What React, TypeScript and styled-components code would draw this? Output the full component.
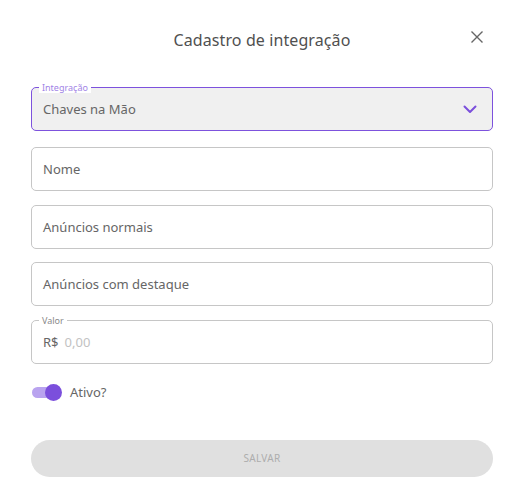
import React from "react";
import styled, { createGlobalStyle } from "styled-components";

const Global = createGlobalStyle`
  html, body { margin: 0; padding: 0; background: #fff; }
  body { font-family: "Noto Sans", "Liberation Sans", sans-serif; }
  * { box-sizing: border-box; }
`;

const Dialog = styled.div`
  width: 531px;
  height: 503px;
  background: #fff;
  padding: 0 38px 0 31px;
  display: flex;
  flex-direction: column;
`;

const Header = styled.div`
  position: relative;
  height: 80px;
  display: flex;
  align-items: center;
  justify-content: center;
`;

const Title = styled.h2`
  margin: 0;
  font-size: 16px;
  font-weight: 400;
  color: #505050;
  letter-spacing: 0.1px;
`;

const Close = styled.button`
  position: absolute;
  right: 6px;
  top: 27px;
  width: 20px;
  height: 20px;
  border: 0;
  background: none;
  padding: 0;
  display: flex;
  align-items: center;
  justify-content: center;
  cursor: pointer;
`;

const Form = styled.div`
  display: flex;
  flex-direction: column;
  padding-top: 7px;
`;

const Field = styled.div<{ $mt?: number; $select?: boolean }>`
  position: relative;
  height: 44px;
  margin-top: ${(p) => p.$mt ?? 0}px;
  border: 1px solid ${(p) => (p.$select ? "#7d52dd" : "#c6c6c6")};
  border-radius: 5px;
  background: ${(p) => (p.$select ? "#f0f0f0" : "#fff")};
  display: flex;
  align-items: center;
  padding: 0 11px;
  font-size: 13px;
  color: #666;
`;

const Legend = styled.span<{ $purple?: boolean }>`
  position: absolute;
  top: -6px;
  left: 7px;
  padding: 0 3px;
  background: #fff;
  font-size: 9px;
  line-height: 11px;
  color: ${(p) => (p.$purple ? "#a184e6" : "#8a8a8a")};
`;

const Value = styled.span`
  flex: 1;
`;

const Currency = styled.span`
  color: #666;
  margin-right: 6px;
`;

const Placeholder = styled.span`
  color: #c2c2c2;
`;

const ToggleRow = styled.div`
  display: flex;
  align-items: center;
  margin-top: 19px;
  height: 18px;
  font-size: 13px;
  color: #666;
`;

const Track = styled.div`
  position: relative;
  width: 26px;
  height: 11px;
  border-radius: 6px;
  background: #b9a3ef;
  margin-left: 1px;
  margin-right: 12px;
`;

const Thumb = styled.div`
  position: absolute;
  right: -4px;
  top: -3px;
  width: 17px;
  height: 17px;
  border-radius: 50%;
  background: #7b4fdc;
`;

const SaveButton = styled.button`
  margin-top: 39px;
  height: 37px;
  width: 100%;
  border: 0;
  border-radius: 19px;
  background: #e0e0e0;
  color: #adadad;
  font-family: inherit;
  font-size: 10px;
  line-height: 12px;
  padding: 0 0 2px;
  letter-spacing: 0.3px;
`;

export default function App() {
  return (
    <>
      <Global />
      <Dialog>
        <Header>
          <Title>Cadastro de integração</Title>
          <Close aria-label="Fechar">
            <svg width="14" height="14" viewBox="0 0 14 14">
              <path d="M1.5 1.5 L12.5 12.5 M12.5 1.5 L1.5 12.5" stroke="#666" strokeWidth="1.4" fill="none" />
            </svg>
          </Close>
        </Header>
        <Form>
          <Field $select>
            <Legend $purple>Integração</Legend>
            <Value>Chaves na Mão</Value>
            <svg width="14" height="9" viewBox="0 0 14 9" style={{ marginRight: 4 }}>
              <path d="M1.5 1.5 L7 7 L12.5 1.5" stroke="#7b4fdc" strokeWidth="2" fill="none" strokeLinecap="round" strokeLinejoin="round" />
            </svg>
          </Field>
          <Field $mt={16}>
            <Value>Nome</Value>
          </Field>
          <Field $mt={14}>
            <Value>Anúncios normais</Value>
          </Field>
          <Field $mt={13}>
            <Value>Anúncios com destaque</Value>
          </Field>
          <Field $mt={14}>
            <Legend>Valor</Legend>
            <Currency>R$</Currency>
            <Placeholder>0,00</Placeholder>
          </Field>
          <ToggleRow>
            <Track>
              <Thumb />
            </Track>
            Ativo?
          </ToggleRow>
          <SaveButton disabled>SALVAR</SaveButton>
        </Form>
      </Dialog>
    </>
  );
}
